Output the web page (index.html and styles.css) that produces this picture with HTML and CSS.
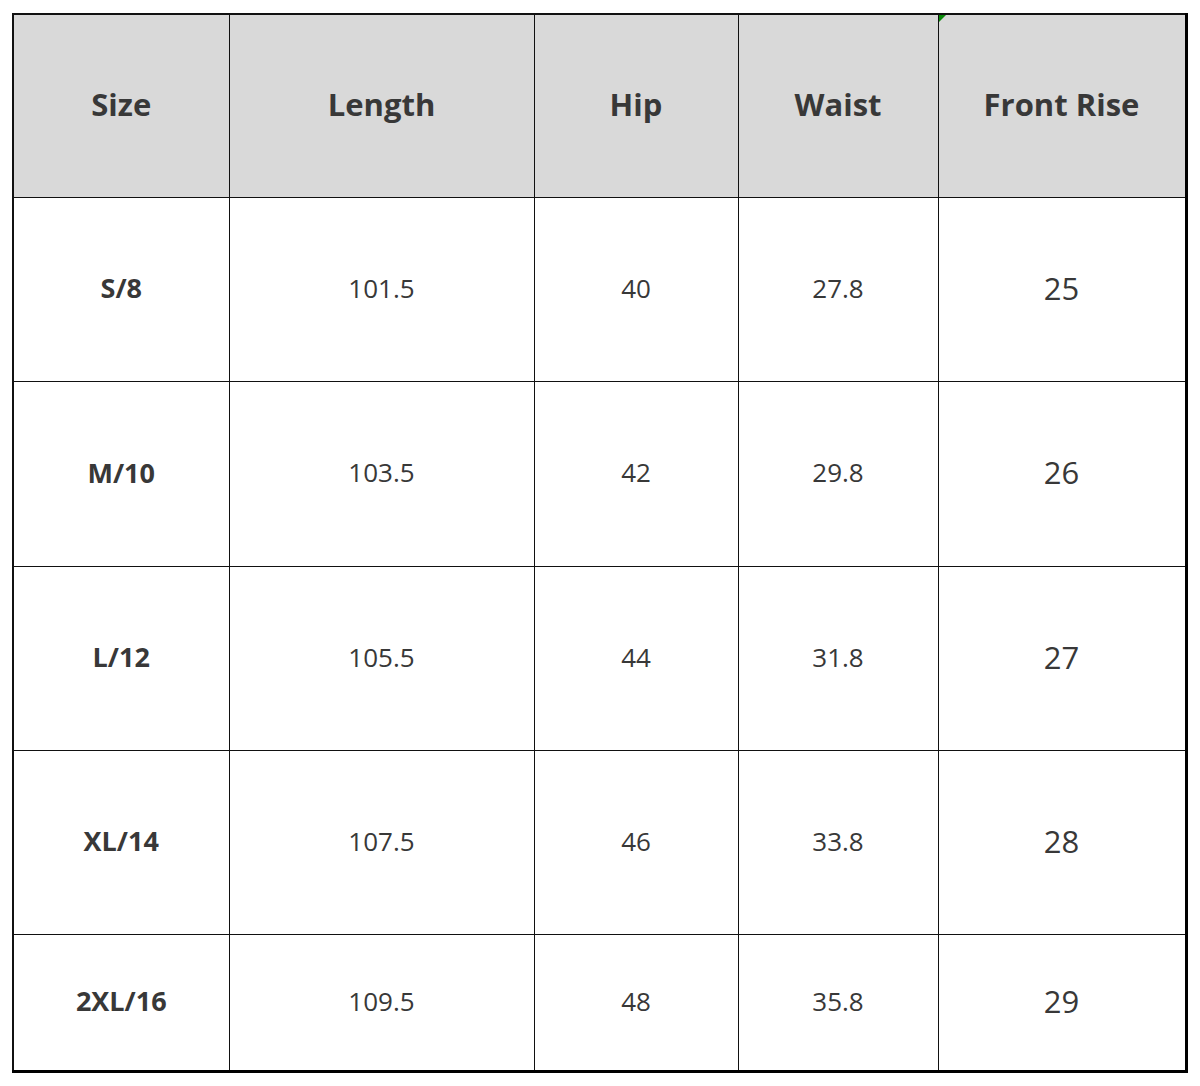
FILE: index.html
```html
<!DOCTYPE html>
<html>
<head>
<meta charset="utf-8">
<link rel="stylesheet" href="styles.css">
</head>
<body>
<table class="size-table">
  <colgroup>
    <col class="c1"><col class="c2"><col class="c3"><col class="c4"><col class="c5">
  </colgroup>
  <thead>
    <tr class="head">
      <th>Size</th><th>Length</th><th>Hip</th><th>Waist</th><th class="flag">Front Rise</th>
    </tr>
  </thead>
  <tbody>
    <tr class="row"><th>S/8</th><td>101.5</td><td>40</td><td>27.8</td><td class="big">25</td></tr>
    <tr class="row tall"><th>M/10</th><td>103.5</td><td>42</td><td>29.8</td><td class="big">26</td></tr>
    <tr class="row"><th>L/12</th><td>105.5</td><td>44</td><td>31.8</td><td class="big">27</td></tr>
    <tr class="row"><th>XL/14</th><td>107.5</td><td>46</td><td>33.8</td><td class="big">28</td></tr>
    <tr class="row last"><th>2XL/16</th><td>109.5</td><td>48</td><td>35.8</td><td class="big">29</td></tr>
  </tbody>
</table>
</body>
</html>
```

FILE: styles.css
```css
html, body {
  margin: 0;
  padding: 0;
  background: #ffffff;
}
body {
  padding: 13px 0 0 12px;
  font-family: "Open Sans", "Noto Sans", sans-serif;
  color: #383838;
}
.size-table {
  border-collapse: collapse;
  table-layout: fixed;
  width: 1175px;
  border-left: 2px solid #111;
  border-top: 2px solid #111;
  border-right: 3px solid #000;
  border-bottom: 3px solid #000;
}
.c1 { width: 216px; }
.c2 { width: 305px; }
.c3 { width: 204px; }
.c4 { width: 200px; }
.c5 { width: 248px; }
.size-table th,
.size-table td {
  border: 1px solid #111;
  text-align: center;
  vertical-align: middle;
  padding: 0 0 4px 0;
}
.head th {
  background: #d9d9d9;
  height: 178px;
  font-size: 31px;
  font-weight: 700;
}
.row { height: 184px; }
.row.tall { height: 185px; }
.row.last { height: 137px; }
.row th {
  font-size: 27px;
  font-weight: 700;
}
.row td {
  font-size: 26px;
  font-weight: 400;
}
.row td.big {
  font-size: 31px;
}
.flag { position: relative; }
.flag::before {
  content: "";
  position: absolute;
  left: 0;
  top: 0;
  width: 0;
  height: 0;
  border-top: 7px solid #0a8a0a;
  border-right: 7px solid transparent;
}
```
